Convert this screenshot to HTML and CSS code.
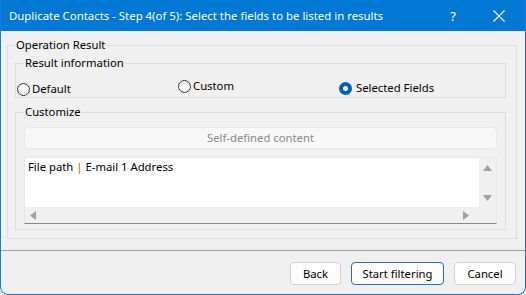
FILE: index.html
```html
<!DOCTYPE html>
<html>
<head>
<meta charset="utf-8">
<link rel="stylesheet" href="styles.css">
</head>
<body>
<div class="window">
  <div class="titlebar">
    <span class="title">Duplicate Contacts - Step 4(of 5): Select the fields to be listed in results</span>
    <span class="help">?</span>
    <svg class="close" width="12" height="12" viewBox="0 0 12 12"><path d="M0.5 0.5 L11.5 11.5 M11.5 0.5 L0.5 11.5" stroke="#fff" stroke-width="1.1" fill="none"/></svg>
  </div>
  <div class="content">
    <fieldset class="outer">
      <legend>Operation Result</legend>
      <fieldset class="group info">
        <legend>Result information</legend>
        <div class="radios">
          <label class="radio r-default"><span class="dot"></span>Default</label>
          <label class="radio r-custom"><span class="dot"></span>Custom</label>
          <label class="radio r-selected"><span class="dot on"></span>Selected Fields</label>
        </div>
      </fieldset>
      <fieldset class="group customize">
        <legend>Customize</legend>
        <div class="selfdef">Self-defined content</div>
        <div class="textbox">
          <div class="tb-main">
            <div class="tb-text">File path <span class="sep">|</span> E-mail 1 Address</div>
            <div class="vscroll">
              <svg width="9" height="6" viewBox="0 0 9 6"><path d="M4.5 0 L9 6 L0 6 Z" fill="#a0a0a0"/></svg>
              <svg width="9" height="6" viewBox="0 0 9 6"><path d="M0 0 L9 0 L4.5 6 Z" fill="#a0a0a0"/></svg>
            </div>
          </div>
          <div class="hscroll">
            <svg width="6" height="9" viewBox="0 0 6 9"><path d="M6 0 L6 9 L0 4.5 Z" fill="#a0a0a0"/></svg>
            <svg width="6" height="9" viewBox="0 0 6 9"><path d="M0 0 L6 4.5 L0 9 Z" fill="#a0a0a0"/></svg>
            <div class="corner"></div>
          </div>
        </div>
      </fieldset>
    </fieldset>
  </div>
  <div class="footer">
    <button class="btn btn-back">Back</button>
    <button class="btn btn-start">Start filtering</button>
    <button class="btn btn-cancel">Cancel</button>
  </div>
</div>
</body>
</html>
```

FILE: styles.css
```css
* { box-sizing: border-box; }
html, body { margin: 0; padding: 0; background: #ffffff; }
body {
  font-family: "Noto Sans", "Open Sans", sans-serif;
  font-size: 11.3px;
  color: #000;
}
.window {
  width: 526px;
  height: 295px;
  background: #f0f0f0;
  border: 1px solid #1c7ad4;
  border-top: 0;
  border-radius: 0 0 8px 8px;
  display: flex;
  flex-direction: column;
  overflow: hidden;
}
.titlebar {
  height: 31px;
  background: #0078d4;
  color: #fff;
  display: flex;
  align-items: center;
  padding-left: 9px;
  flex: none;
  margin: 0 -1px;
}
.title { flex: 1; white-space: nowrap; font-size: 11.4px; }
.help { width: 20px; text-align: center; margin-right: 30px; font-size: 13px; }
.close { margin-right: 21px; }
.content {
  padding: 6px 8px 0 6px;
  flex: none;
}
fieldset {
  margin: 0;
  border: 1px solid #dcdcdc;
  min-width: 0;
}
legend {
  padding: 0 1px;
  line-height: 16px;
  margin-left: 0;
}
.outer {
  padding: 2px 10px 7px 7px;
  height: 202px;
}
.group { padding: 0 8px 0 8px; }
.info { height: 43px; margin-bottom: 6px; }
.radios { position: relative; height: 26px; display: flex; }
.radio {
  display: flex;
  align-items: center;
  white-space: nowrap;
  line-height: 16px;
}
.r-default { margin-left: -7px; margin-top: 10px; width: 161px; }
.r-custom { margin-top: 4px; width: 161px; }
.r-selected { margin-top: 8px; }
.dot {
  width: 13px;
  height: 13px;
  border-radius: 50%;
  border: 1px solid #333;
  background: #f6f6f6;
  margin-right: 2px;
  flex: none;
}
.dot.on {
  border: 4px solid #005fb8;
  background: #fff;
}
.r-selected .dot { margin-right: 4px; }
.customize { height: 126px; padding-top: 7px; }
.selfdef {
  height: 22px;
  background: #f8f8f8;
  border: 1px solid #e8e8e8;
  border-radius: 4px;
  color: #8a8a8a;
  text-align: center;
  line-height: 20px;
  margin-right: 0;
}
.textbox {
  margin-top: 8px;
  height: 67px;
  background: #fff;
  border: 1px solid #e6e6e6;
  border-bottom: 1px solid #868686;
  display: flex;
  flex-direction: column;
}
.tb-main { flex: 1; display: flex; }
.tb-text { flex: 1; padding: 1px 3px; line-height: 16px; color: #000; }
.sep { color: #c06000; }
.vscroll {
  width: 17px;
  background: #f0f0f0;
  display: flex;
  flex-direction: column;
  align-items: center;
  justify-content: space-between;
  padding: 7px 0 6px;
}
.hscroll {
  height: 16px;
  background: #f0f0f0;
  display: flex;
  align-items: center;
  padding-left: 5px;
}
.hscroll svg:nth-child(2) { margin-left: auto; margin-right: 10px; }
.corner { width: 17px; height: 16px; background: #f0f0f0; }
.footer {
  margin-top: 11px;
  border-top: 1px solid #a0a0a0;
  flex: 1;
  display: flex;
  justify-content: flex-end;
  align-items: flex-start;
  padding: 11px 9px 0 0;
  gap: 10px;
}
.btn {
  height: 23px;
  font-family: "Noto Sans", "Open Sans", sans-serif;
  font-size: 11.3px;
  background: #fdfdfd;
  border: 1px solid #d0d0d0;
  border-radius: 4px;
  color: #000;
  padding: 0;
  line-height: 20px;
}
.btn-back { width: 51px; }
.btn-start { width: 93px; border-color: #1a6fc4; }
.btn-cancel { width: 62px; }
```
